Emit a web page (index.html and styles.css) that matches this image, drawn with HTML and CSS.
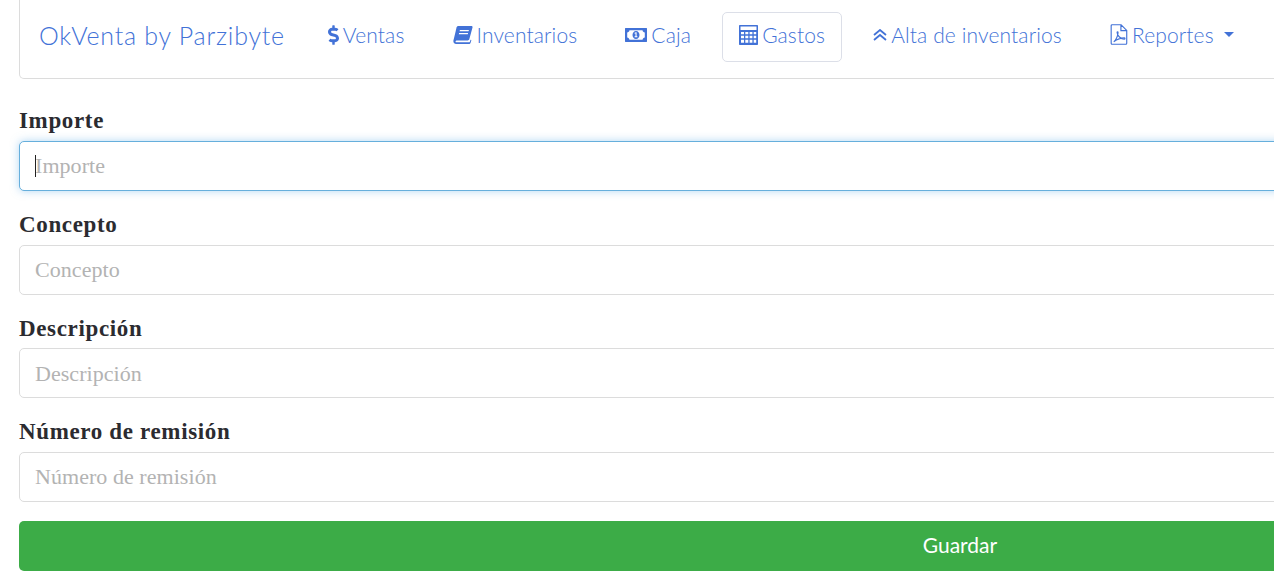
FILE: index.html
```html
<!DOCTYPE html>
<html lang="es">
<head>
    <meta charset="UTF-8">
    <title>OkVenta by Parzibyte</title>
    <link rel="stylesheet" href="styles.css">
</head>
<body>
    <div class="page">
        <nav class="navbar">
            <a class="brand" href="#">OkVenta by Parzibyte</a>
            <ul class="nav-list">
                <li><a class="nav-link" href="#">
                    <svg class="icon icon-dollar" viewBox="0 0 288 512"><path d="M209.2 233.4l-108-31.6C88.7 198.2 80 186.5 80 173.5c0-16.3 13.2-29.5 29.5-29.5h66.3c12.2 0 24.2 3.7 34.2 10.5 6.1 4.1 14.3 3.1 19.5-2l34.8-34c7.1-6.9 6.1-18.4-1.8-24.5C238 74.8 207.4 64.1 176 64V16c0-8.8-7.2-16-16-16h-32c-8.8 0-16 7.2-16 16v48h-2.5C45.8 64-5.4 118.7.5 183.6c4.2 46.1 39.4 83.6 83.8 96.6l102.5 30c12.5 3.7 21.2 15.3 21.2 28.3 0 16.3-13.2 29.5-29.5 29.5h-66.3C100 368 88 364.3 78 357.5c-6.1-4.1-14.3-3.1-19.5 2l-34.8 34c-7.1 6.9-6.1 18.4 1.8 24.5 24.5 19.2 55.1 29.9 86.5 30v48c0 8.8 7.2 16 16 16h32c8.8 0 16-7.2 16-16v-48.2c46.6-.9 90.3-28.6 105.7-72.7 21.5-61.6-14.6-124.8-72.5-141.7z"/></svg>
                    Ventas</a></li>
                <li><a class="nav-link" href="#">
                    <svg class="icon icon-book" viewBox="0 0 20 18"><path d="M5.500 0H18.400c.9 0 1.400.7 1.100 1.600l-3.200 11.600c-.2.7-.8 1.200-1.600 1.200H4.200c-1 0-1.600.5-1.700 1 0 .5.5.9 1.300.9H16c.4 0 .7-.3.9-.6l.6-2 .9.4-.8 2.600c-.2.7-.9 1.300-1.700 1.300H3.400C1.300 18 .1 16.800.4 14.800.5 14.300 3.300 3.100 3.500 1.600 3.700.6 4.500 0 5.500 0zM6.900 4l-.3 1.200h9l.3-1.200zM6.100 7l-.3 1.200h9l.3-1.200z" fill-rule="evenodd"/></svg>
                    Inventarios</a></li>
                <li><a class="nav-link" href="#">
                    <svg class="icon icon-money" viewBox="0 0 22 14"><path fill-rule="evenodd" d="M.5 0h21c.3 0 .5.2.5.5v13c0 .3-.2.5-.5.5H.5c-.3 0-.5-.2-.5-.5V.5C0 .2.2 0 .5 0zM4.500 2.200C4.300 3.500 3.300 4.400 2.200 4.600v4.800c1.200.2 2.100 1.100 2.300 2.400h13c.2-1.300 1.100-2.200 2.300-2.400V4.600c-1.200-.2-2.100-1.100-2.300-2.400zM11 3c2.100 0 3.500 1.800 3.500 4s-1.400 4-3.500 4-3.500-1.800-3.500-4 1.400-4 3.500-4zM10.900 4.300l-1.300.5v.9l.9-.3v2.900h-.9v.9h2.800v-.9h-.8V4.300z"/></svg>
                    Caja</a></li>
                <li><a class="nav-link active" href="#">
                    <svg class="icon icon-calc" viewBox="0 0 19 20"><path fill-rule="evenodd" d="M1 0h17c.6 0 1 .4 1 1v18c0 .6-.4 1-1 1H1c-.6 0-1-.4-1-1V1c0-.6.4-1 1-1zM1.500 1.500v3.500h16V1.500zM2 7v2.300h3V7zM6.300 7v2.300h3V7zM10.600 7v2.300h2.800V7zM14.700 7v2.300h2.500V7zM2 10.800v2.500h3v-2.500zM6.300 10.800v2.500h3v-2.500zM10.600 10.800v2.500h2.800v-2.500zM14.700 10.800v2.500h2.500v-2.500zM2 14.800v3h3v-3zM6.300 14.800v3h3v-3zM10.600 14.800v3h2.800v-3zM14.700 14.800v3h2.500v-3z"/></svg>
                    Gastos</a></li>
                <li><a class="nav-link" href="#">
                    <svg class="icon icon-double" viewBox="0 0 14 12"><path d="M1 6l6-5 6 5M1 11l6-5 6 5" fill="none" stroke="currentColor" stroke-width="1.800"/></svg>
                    Alta de inventarios</a></li>
                <li><a class="nav-link" href="#">
                    <svg class="icon icon-pdf" viewBox="0 0 18 22"><path d="M1.800.8h9.400l5.900 5.900v13.500c0 .6-.4 1-1 1H1.800c-.6 0-1-.4-1-1V1.800c0-.6.4-1 1-1zM11 1v6h6M3.500 18.500c2-1 4.500-6 4.500-9.500 0-1-1-1-1 0 0 3 4 7 7.500 7 1 0 1-1.500 0-1.500-3 0-7.500 1.500-11 4z" fill="none" stroke="currentColor" stroke-width="1.200"/></svg>
                    Reportes <span class="caret"></span></a></li>
            </ul>
        </nav>

        <form class="form">
            <div class="form-group">
                <label class="form-label" for="importe">Importe</label>
                <div class="field">
                    <input class="form-input is-focused" id="importe" type="text" placeholder="Importe">
                    <span class="cursor"></span>
                </div>
            </div>
            <div class="form-group">
                <label class="form-label" for="concepto">Concepto</label>
                <input class="form-input" id="concepto" type="text" placeholder="Concepto">
            </div>
            <div class="form-group">
                <label class="form-label" for="descripcion">Descripción</label>
                <input class="form-input" id="descripcion" type="text" placeholder="Descripción">
            </div>
            <div class="form-group last">
                <label class="form-label" for="remision">Número de remisión</label>
                <input class="form-input" id="remision" type="text" placeholder="Número de remisión">
            </div>
            <button class="btn-save" type="button">Guardar</button>
        </form>
    </div>
</body>
</html>
```

FILE: styles.css
```css
html, body {
    margin: 0;
    padding: 0;
    background: #fff;
    height: 574px;
    overflow: hidden;
}
.page {
    width: 1882px;
    margin-left: 19px;
    font-family: Lato, sans-serif;
}
.navbar {
    display: flex;
    align-items: center;
    height: 79px;
    box-sizing: border-box;
    padding: 0 19px 4px 19px;
    border: 1px solid #dcdcdc;
    border-top: 0;
    border-radius: 0 0 5px 5px;
    margin-bottom: 24.33px;
}
.brand {
    color: #4272d7;
    font-size: 25px;
    font-weight: 300;
    letter-spacing: .75px;
    text-decoration: none;
    margin-right: 26px;
    padding-bottom: 5px;
}
.nav-list {
    display: flex;
    list-style: none;
    gap: 14.1px;
    margin: 0;
    padding: 0;
}
.nav-link {
    display: flex;
    align-items: center;
    gap: 4px;
    height: 50px;
    box-sizing: border-box;
    padding: 0 16px 5px;
    border: 1px solid transparent;
    border-radius: 5px;
    color: #4272d7;
    font-size: 21px;
    font-weight: 300;
    letter-spacing: .12px;
    text-decoration: none;
    white-space: nowrap;
}
.nav-link.active {
    border-color: #dcdfe8;
}
.icon {
    fill: currentColor;
    flex: none;
}
.icon-dollar { width: 11px; height: 20px; }
.icon-book { width: 20px; height: 18px; }
.icon-money { width: 22px; height: 14px; }
.icon-calc { width: 19px; height: 20px; }
.icon-double { width: 14px; height: 12px; }
.icon-pdf { width: 18px; height: 21px; }
.caret {
    width: 0;
    height: 0;
    margin-left: 6px;
    border-top: 5px solid #4272d7;
    border-left: 5px solid transparent;
    border-right: 5px solid transparent;
}
.form-group {
    margin-bottom: 16px;
}
.form-group.last {
    margin-bottom: 19px;
}
.form-label {
    display: block;
    height: 29.67px;
    line-height: 35px;
    margin-bottom: 8px;
    font-family: "Liberation Serif", serif;
    font-weight: bold;
    font-size: 23px;
    letter-spacing: .65px;
    color: #2b2b30;
}
.field {
    position: relative;
}
.form-input {
    display: block;
    width: 100%;
    height: 50px;
    box-sizing: border-box;
    padding: 1px 15px 0;
    border: 1px solid #dcdcdc;
    border-radius: 5px;
    outline: 0;
    font-family: "Liberation Serif", serif;
    font-size: 22px;
    letter-spacing: .05px;
    color: #333;
}
.form-input::placeholder {
    color: #b3b3b3;
    opacity: 1;
}
.form-input.is-focused {
    border-color: #66afdc;
    box-shadow: 0 0 8px rgba(102, 175, 233, .5);
}
.cursor {
    position: absolute;
    left: 16px;
    top: 14px;
    width: 1px;
    height: 22px;
    background: #222;
}
.btn-save {
    display: block;
    width: 100%;
    height: 50px;
    padding: 0 0 2px;
    border: 0;
    border-radius: 5px;
    background: #3cac47;
    color: #fff;
    font-family: Lato, sans-serif;
    font-size: 21px;
}
```
